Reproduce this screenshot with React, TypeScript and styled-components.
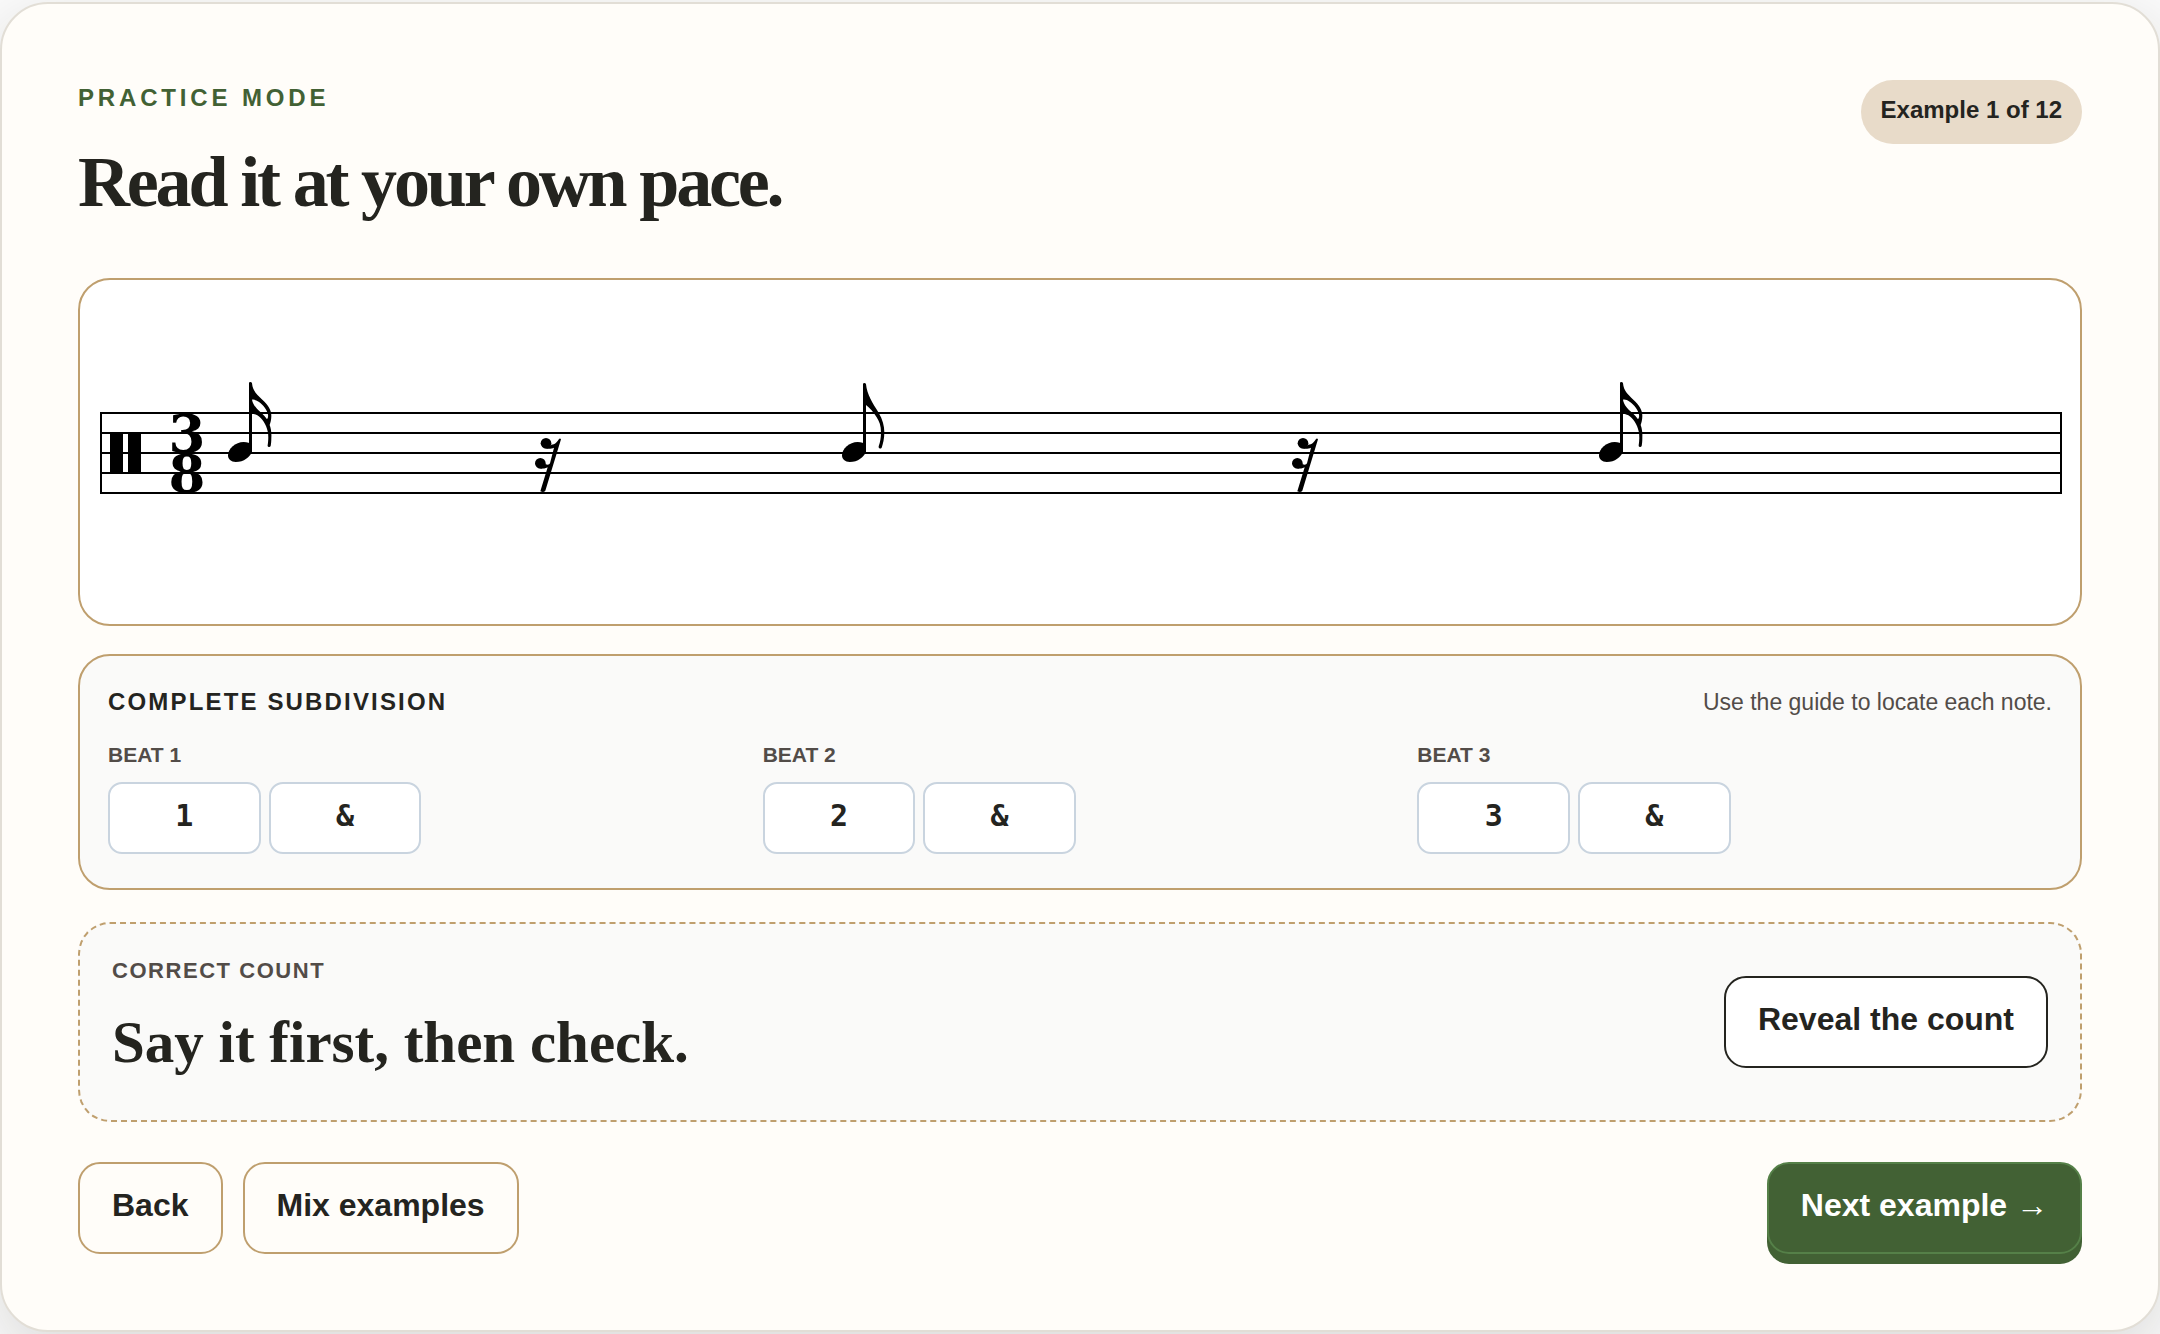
import React from "react";
import styled, { createGlobalStyle } from "styled-components";

const color = {
  page: "#fafafa",
  card: "#fffdf9",
  cardEdge: "#e2ded6",
  panel: "#fafaf9",
  gold: "#bf9f6e",
  ink: "#24241f",
  muted: "#524c48",
  green: "#426134",
  greenEdge: "#558048",
  badge: "#e8dbc9",
  slotEdge: "#c9d4df",
};

const sans = `"Liberation Sans", Arial, sans-serif`;
const serif = `"Liberation Serif", "Times New Roman", serif`;
const meter = `"DejaVu Serif", serif`;
const mono = `"DejaVu Sans Mono", monospace`;

const GlobalStyle = createGlobalStyle`
  *, *::before, *::after { box-sizing: border-box; }
  body {
    margin: 0;
    background: ${color.page};
    color: ${color.ink};
    font-family: ${sans};
  }
  h1, h2, h3, p, ul { margin: 0; padding: 0; }
`;

const Page = styled.div`
  padding: 2px 0;
  overflow: hidden;
`;

const Card = styled.main`
  min-height: calc(100vh - 4px);
  padding: 76px;
  background: ${color.card};
  border: 2px solid ${color.cardEdge};
  border-radius: 48px;
  box-shadow: 0 20px 60px rgba(36, 36, 31, 0.14);
`;

const Header = styled.header`
  display: flex;
  justify-content: space-between;
  align-items: flex-start;
  gap: 24px;
  margin-bottom: 54px;
`;

const Heading = styled.div`
  display: flex;
  flex-direction: column;
  gap: 24px;
`;

const Eyebrow = styled.p`
  color: ${color.green};
  font-size: 24px;
  font-weight: 700;
  line-height: 36px;
  letter-spacing: 0.16em;
  text-transform: uppercase;
`;

const Title = styled.h1`
  font-family: ${serif};
  font-size: 72px;
  font-weight: 700;
  line-height: 84px;
  letter-spacing: -0.044em;
`;

const Badge = styled.span`
  flex: none;
  padding: 12px 20px 16px;
  border-radius: 32px;
  background: ${color.badge};
  font-size: 24px;
  font-weight: 700;
  line-height: 36px;
`;

const Panel = styled.section`
  border: 2px solid ${color.gold};
  border-radius: 32px;
`;

const StaffPanel = styled(Panel)`
  padding: 20px;
  margin-bottom: 28px;
  background: #fff;
`;

const StaffDrawing = styled.svg`
  display: block;
  width: 100%;
  height: auto;
  overflow: visible;
`;

const Meter = styled.text`
  font-family: ${meter};
  font-size: 53px;
  font-weight: 700;
  text-anchor: middle;
`;

const GuidePanel = styled(Panel)`
  display: flex;
  flex-direction: column;
  gap: 20px;
  padding: 28px 28px 34px;
  margin-bottom: 32px;
  background: ${color.panel};
`;

const GuideHeader = styled.div`
  display: flex;
  justify-content: space-between;
  align-items: baseline;
  gap: 20px;
`;

const GuideTitle = styled.h2`
  font-size: 24px;
  font-weight: 700;
  line-height: 36px;
  letter-spacing: 0.09em;
  text-transform: uppercase;
`;

const Hint = styled.p`
  color: ${color.muted};
  font-size: 23px;
  line-height: 36px;
`;

const Beats = styled.div`
  display: grid;
  grid-template-columns: repeat(3, 1fr);
  gap: 20px;
`;

const Beat = styled.div`
  display: flex;
  flex-direction: column;
  gap: 12px;
`;

const SmallLabel = styled.h3<{ $spaced?: boolean }>`
  color: ${color.muted};
  font-size: ${(p) => (p.$spaced ? "22px" : "21px")};
  font-weight: 700;
  line-height: 30px;
  letter-spacing: ${(p) => (p.$spaced ? "0.07em" : "normal")};
  text-transform: uppercase;
`;

const Slots = styled.ul`
  display: grid;
  grid-template-columns: repeat(4, 1fr);
  gap: 8px;
  list-style: none;
`;

const Slot = styled.li`
  padding: 12px 8px 16px;
  border: 2px solid ${color.slotEdge};
  border-radius: 14px;
  background: #fff;
  font-family: ${mono};
  font-size: 30px;
  font-weight: 700;
  line-height: 40px;
  text-align: center;
`;

const CountPanel = styled(Panel)`
  display: flex;
  justify-content: space-between;
  align-items: center;
  gap: 32px;
  padding: 32px;
  margin-bottom: 40px;
  border-style: dashed;
  background: ${color.panel};
`;

const CountText = styled.div`
  display: flex;
  flex-direction: column;
  gap: 10px;
`;

const Prompt = styled.p`
  font-family: ${serif};
  font-size: 59px;
  font-weight: 700;
  line-height: 92px;
`;

const Button = styled.button<{ $kind: "outline" | "dark" | "primary" }>`
  flex: none;
  padding: 20px 32px 26px;
  border: 2px solid
    ${(p) => ({ outline: color.gold, dark: color.ink, primary: color.greenEdge })[p.$kind]};
  border-radius: 22px;
  background: ${(p) =>
    ({ outline: "transparent", dark: "#fff", primary: color.green })[p.$kind]};
  box-shadow: ${(p) => (p.$kind === "primary" ? `0 10px 0 ${color.green}` : "none")};
  color: ${(p) => (p.$kind === "primary" ? "#fff" : color.ink)};
  font-family: ${sans};
  font-size: 32px;
  font-weight: 700;
  line-height: 42px;
  cursor: pointer;
`;

const Actions = styled.footer`
  display: flex;
  justify-content: space-between;
  gap: 20px;
`;

const ActionGroup = styled.div`
  display: flex;
  gap: 20px;
`;

/* Glyphs are drawn at three times their size, from the left of the notehead. */
const glyph = (x: number) => `translate(${x} 60) scale(0.33333)`;

const Notehead = () => (
  <path d="M0 286C0 266 22 246 47 246C58 246 66 249 72 253V275C66 290 48 306 23 306C9 306 0 298 0 286Z" />
);

const EighthNote = ({ x }: { x: number }) => (
  <g transform={glyph(x)}>
    <Notehead />
    <path d="M63 73Q63 69 67 69Q71 69 72 73C75 104 92 130 110 158C122 178 127 198 127 217C127 236 123 252 119 263Q116 267 112 265Q109 263 110 259C115 246 117 232 117 217C117 198 112 184 104 172C94 156 84 144 72 135V275H63Z" />
  </g>
);

const SixteenthNote = ({ x }: { x: number }) => (
  <g transform={glyph(x)}>
    <Notehead />
    <path
      fillRule="evenodd"
      d="M63 69Q63 66 67 66Q71 66 72 70C74 92 86 103 103 119C121 136 130 150 130 168C130 180 127 188 125 195C129 205 131 220 130 234C130 245 129 252 128 258Q126 262 122 261Q118 260 119 256C121 244 122 226 119 214C115 194 102 174 88 166C82 163 77 161 72 161V275H63ZM72 119C75 135 86 146 98 157C107 165 113 172 117 178C120 173 121 170 120 164C118 150 106 135 92 125C85 120 78 118 72 119Z"
    />
  </g>
);

const SixteenthRest = ({ x }: { x: number }) => (
  <g transform={glyph(x)}>
    <circle cx="33" cy="250" r="16" />
    <circle cx="16" cy="310" r="16" />
    <path d="M49 254C60 254 66 245 73 236Q76 234 78 238L31 392Q26 399 16 394L38 322C31 326 24 326 16 326L31 312C38 316 43 314 45 310L57 263C50 267 42 266 33 266Z" />
  </g>
);

const Staff = () => (
  <StaffDrawing
    viewBox="0 0 1960 304"
    role="img"
    aria-label="Rhythm in three eight: sixteenth note, sixteenth rest, eighth note, sixteenth rest, sixteenth note"
  >
    {[113, 133, 153, 173, 193].map((y) => (
      <path key={y} d={`M0 ${y}H1962`} stroke="#000" strokeWidth="2" />
    ))}
    <path d="M1 112V194M1961 112V194" stroke="#000" strokeWidth="2" />
    <path d="M10 133H23V173H10ZM28 133H41V173H28Z" />
    <Meter x="87" y="152">3</Meter>
    <Meter x="87" y="192">8</Meter>
    <SixteenthNote x={128} />
    <SixteenthRest x={435} />
    <EighthNote x={742} />
    <SixteenthRest x={1192} />
    <SixteenthNote x={1499} />
  </StaffDrawing>
);

export default function App() {
  return (
    <Page>
      <GlobalStyle />
      <Card>
        <Header>
          <Heading>
            <Eyebrow>Practice mode</Eyebrow>
            <Title>Read it at your own pace.</Title>
          </Heading>
          <Badge>Example 1 of 12</Badge>
        </Header>

        <StaffPanel>
          <Staff />
        </StaffPanel>

        <GuidePanel>
          <GuideHeader>
            <GuideTitle>Complete subdivision</GuideTitle>
            <Hint>Use the guide to locate each note.</Hint>
          </GuideHeader>
          <Beats>
            {[1, 2, 3].map((n) => (
              <Beat key={n}>
                <SmallLabel>Beat {n}</SmallLabel>
                <Slots>
                  <Slot>{n}</Slot>
                  <Slot>&amp;</Slot>
                </Slots>
              </Beat>
            ))}
          </Beats>
        </GuidePanel>

        <CountPanel>
          <CountText>
            <SmallLabel $spaced>Correct count</SmallLabel>
            <Prompt>Say it first, then check.</Prompt>
          </CountText>
          <Button type="button" $kind="dark">
            Reveal the count
          </Button>
        </CountPanel>

        <Actions>
          <ActionGroup>
            <Button type="button" $kind="outline">
              Back
            </Button>
            <Button type="button" $kind="outline">
              Mix examples
            </Button>
          </ActionGroup>
          <Button type="button" $kind="primary">
            Next example →
          </Button>
        </Actions>
      </Card>
    </Page>
  );
}
